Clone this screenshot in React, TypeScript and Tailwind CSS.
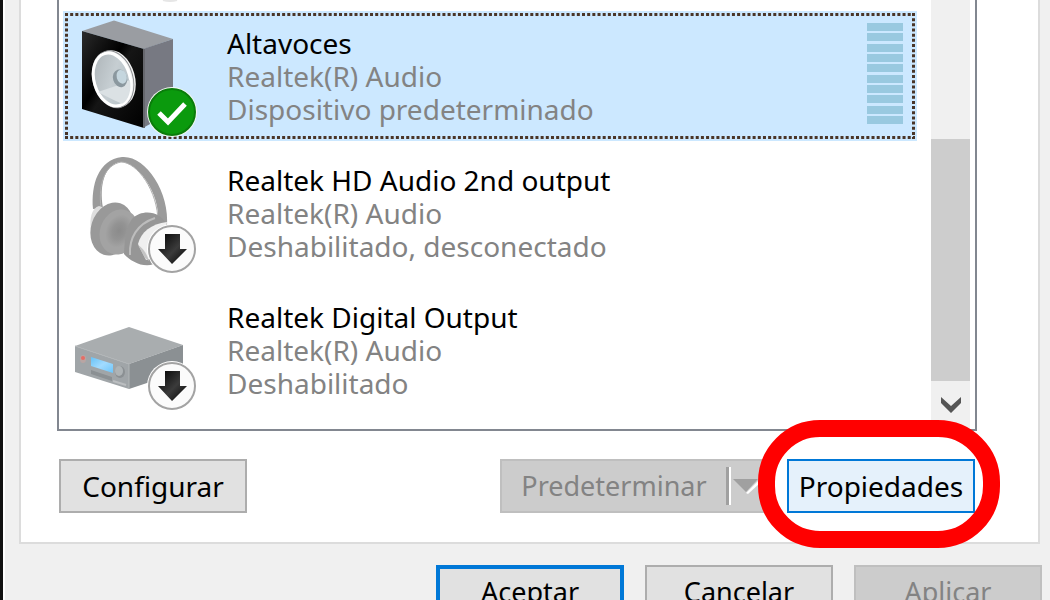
import type { ReactNode } from "react";

function SpeakerIcon() {
  return (
    <svg viewBox="0 0 130 130" className="h-full w-full" aria-hidden="true">
      <defs>
        <linearGradient id="cone" x1="0" y1="0" x2="1" y2="1">
          <stop offset="0" stopColor="#a9b0b4" />
          <stop offset="0.5" stopColor="#c6ced2" />
          <stop offset="1" stopColor="#aebbc2" />
        </linearGradient>
        <linearGradient id="front" x1="0" y1="0" x2="1" y2="1">
          <stop offset="0" stopColor="#2b2b2b" />
          <stop offset="0.4" stopColor="#000" />
          <stop offset="0.5" stopColor="#151515" />
          <stop offset="1" stopColor="#000" />
        </linearGradient>
      </defs>
      <path d="M19 20 51 9.500 110 28 81 38Z" fill="#9a9da2" />
      <path d="M80 38 110 28V100L80 117Z" fill="#777982" />
      <path d="M19 20 81 38V117L19 98Z" fill="url(#front)" />
      <path d="M81 38V117" stroke="#66676d" strokeWidth="2" />
      <g transform="rotate(-16 51 68)">
        <ellipse cx="52" cy="68" rx="20" ry="29" fill="#f2f2f2" />
        <ellipse cx="50" cy="68" rx="20" ry="29" fill="none" stroke="#8d8f92" />
        <ellipse cx="49" cy="68" rx="18" ry="27" fill="url(#cone)" stroke="#fff" strokeWidth="3" />
        <path d="M32 76C38 82 45 88 52 94 60 92 65 83 66 73L57 75Z" fill="#dbe1e4" />
        <ellipse cx="57" cy="69" rx="7" ry="9" fill="#8b989f" />
        <ellipse cx="59" cy="68" rx="5" ry="7" fill="#c5d6de" />
      </g>
    </svg>
  );
}

function HeadphonesIcon() {
  return (
    <svg viewBox="0 0 130 130" className="h-full w-full" aria-hidden="true">
      <defs>
        <radialGradient id="cup">
          <stop offset="0" stopColor="#8b8b8b" />
          <stop offset="0.5" stopColor="#939393" />
          <stop offset="1" stopColor="#a3a3a3" />
        </radialGradient>
      </defs>
      <path
        d="M30 61C28 37 35 12 59 9 82 7 107 43 104 79L95 75C98 45 74 14 58 14 42 16 36 36 40 60Z"
        fill="#9b9b9b"
      />
      <path d="M38 60C35 35 42 17 58 14 74 14 95 43 95 74" fill="none" stroke="#b0b0b0" />
      <path d="M36 58C29 60 26 70 28 82L42 60Z" fill="#dedede" />
      <ellipse cx="49" cy="81" rx="21" ry="27" transform="rotate(18 49 81)" fill="#999" />
      <ellipse cx="56" cy="84" rx="19" ry="23" transform="rotate(20 56 84)" fill="#a3a3a3" />
      <ellipse cx="56" cy="83" rx="13" ry="17" transform="rotate(24 56 83)" fill="url(#cup)" />
      <path d="M69 71C80 60 98 64 104 77L97 112C86 123 69 115 61 106 62 95 61 82 69 71Z" fill="#969696" />
      <path d="M67 107C66 90 74 76 92 70" fill="none" stroke="#bdbdbd" strokeWidth="2" />
      <path d="M75 96C78 84 88 76 104 74L98 108 83 112Z" fill="#efefef" />
      <path d="M82 110 75 97C80 100 84 106 86 113Z" fill="#c4c4c4" />
    </svg>
  );
}

function ReceiverIcon() {
  return (
    <svg viewBox="0 0 130 130" className="h-full w-full" aria-hidden="true">
      <defs>
        <linearGradient id="lcd" x1="0" y1="0" x2="1" y2="1">
          <stop offset="0" stopColor="#66c2f7" />
          <stop offset="0.5" stopColor="#a2dbff" />
          <stop offset="1" stopColor="#6cc5fa" />
        </linearGradient>
      </defs>
      <path d="M12 61 66 42 120 60 66 79Z" fill="#a9adaf" />
      <path d="M12 61 66 79V104L12 87Z" fill="#a0a5a8" />
      <path d="M66 79 120 60V86L66 104Z" fill="#8b9093" />
      <path d="M12 61 66 79V104" fill="none" stroke="#b2b6b8" strokeWidth="1" />
      <path d="M28 72 50 79V88L28 81Z" fill="url(#lcd)" />
      <path d="M28 85 49 92V96L28 89Z" fill="#8b9093" />
      <path d="M50 96 63 100" stroke="#bbbec0" strokeWidth="2" />
      <ellipse cx="20" cy="74" rx="3" ry="4" fill="#b9a5a3" />
      <circle cx="20" cy="73" r="2" fill="#e56d65" />
      <ellipse cx="57" cy="87" rx="5" ry="6" fill="#8b9093" />
      <ellipse cx="56" cy="86" rx="4" ry="5" fill="#aeb3b5" />
    </svg>
  );
}

function CheckBadge() {
  return (
    <svg viewBox="0 0 50 50" className="h-full w-full" aria-hidden="true">
      <circle cx="25" cy="25" r="25" fill="#f4f8f3" />
      <circle cx="25" cy="25" r="23" fill="#0b9a0d" stroke="#0a7c0b" strokeWidth="2" />
      <path d="M12 26 21 35 38 17" fill="none" stroke="#fff" strokeWidth="5" />
    </svg>
  );
}

function DownBadge() {
  return (
    <svg viewBox="0 0 50 50" className="h-full w-full" aria-hidden="true">
      <defs>
        <linearGradient id="arrow" x1="0" y1="0" x2="1" y2="1">
          <stop offset="0" stopColor="#000" />
          <stop offset="0.55" stopColor="#3b3b3b" />
          <stop offset="1" stopColor="#000" />
        </linearGradient>
      </defs>
      <circle cx="25" cy="25" r="25" fill="#fff" />
      <circle cx="25" cy="25" r="23" fill="#fbfbfb" stroke="#a3a3a3" strokeWidth="2" />
      <path d="M18 10H33V25H40L25 40 11 25H18Z" fill="url(#arrow)" />
    </svg>
  );
}

function FocusDots() {
  const dots = { stroke: "#4a3527", strokeWidth: 3, strokeDasharray: "3 2.170" };
  return (
    <svg className="pointer-events-none absolute inset-0.5 h-[126px] w-[calc(100%-4px)]" aria-hidden="true">
      <line x1="0" y1="1.500" x2="100%" y2="1.500" {...dots} />
      <line x1="0" y1="124.500" x2="100%" y2="124.500" {...dots} />
      <line x1="1.500" y1="0" x2="1.500" y2="100%" {...dots} />
      <svg x="100%" className="overflow-visible">
        <line x1="-1.500" y1="0" x2="-1.500" y2="126" {...dots} />
      </svg>
    </svg>
  );
}

type DeviceProps = {
  name: string;
  driver: string;
  status: string;
  icon: ReactNode;
  badge: ReactNode;
  selected?: boolean;
};

function Device({ name, driver, status, icon, badge, selected = false }: DeviceProps) {
  return (
    <li
      role="option"
      aria-selected={selected}
      className={`relative flex h-[130px] items-start pr-[14px] ${selected ? "bg-[#cce8ff]" : "bg-white"}`}
    >
      {selected && <FocusDots />}
      <div className="relative size-[130px] shrink-0">
        {icon}
        <div className="absolute top-[76px] left-[84px] size-[50px]">{badge}</div>
      </div>
      <div className="ml-[34px] flex-1 pt-4 text-[28px] leading-[33px] text-[#838383]">
        <p className="text-black">{name}</p>
        <p>{driver}</p>
        <p>{status}</p>
      </div>
      {selected && (
        <div
          className="mt-3 flex h-[101px] w-9 flex-col justify-between"
          role="meter"
          aria-label="Nivel"
          aria-valuenow={0}
        >
          {Array.from({ length: 10 }, (_, i) => (
            <span key={i} className="h-2 bg-[#99c9e0]" />
          ))}
        </div>
      )}
    </li>
  );
}

export default function App() {
  return (
    <main className="h-screen overflow-hidden border-l-[3px] border-[#111] bg-[#f0f0f0] font-['Noto_Sans',sans-serif] text-[27px] text-black">
      <div className="border-l-2 border-white pr-[10px] pl-[14px]">
        <section className="border-2 border-t-0 border-[#dcdcdc] bg-white pr-[61px] pb-[29px] pl-9">
          <div className="flex border-2 border-t-0 border-[#828790] pr-[5px]">
            <ul role="listbox" aria-label="Dispositivos" className="flex flex-1 flex-col gap-[7px] pr-[14px] pb-[14px] pl-1">
              <li aria-hidden="true" className="h-1 overflow-hidden pl-[87px]">
                <svg viewBox="0 0 40 4" className="h-1 w-10">
                  <path d="M13 0Q20 2 27 0" fill="none" stroke="#e6e6e6" strokeWidth="2" />
                </svg>
              </li>
              <Device
                selected
                name="Altavoces"
                driver="Realtek(R) Audio"
                status="Dispositivo predeterminado"
                icon={<SpeakerIcon />}
                badge={<CheckBadge />}
              />
              <Device
                name="Realtek HD Audio 2nd output"
                driver="Realtek(R) Audio"
                status="Deshabilitado, desconectado"
                icon={<HeadphonesIcon />}
                badge={<DownBadge />}
              />
              <Device
                name="Realtek Digital Output"
                driver="Realtek(R) Audio"
                status="Deshabilitado"
                icon={<ReceiverIcon />}
                badge={<DownBadge />}
              />
            </ul>
            <div className="flex w-[39px] shrink-0 flex-col bg-[#f0f0f0] pt-[139px]">
              <div className="flex-1 bg-[#cdcdcd]" />
              <button type="button" aria-label="Desplazar hacia abajo" className="flex h-12 items-center justify-center">
                <svg viewBox="0 0 20 16" className="h-4 w-5" aria-hidden="true">
                  <path d="M0 0 10 9 20 0V6L10 16 0 6Z" fill="#555" />
                </svg>
              </button>
            </div>
          </div>

          <div className="mt-7 flex px-[2px]">
            <button
              type="button"
              className="h-[54px] w-[188px] border-2 border-[#adadad] bg-[#e1e1e1] text-center text-[28px]"
            >
              Configurar
            </button>
            <div className="mr-[17px] ml-auto flex h-[54px] w-[270px] items-center border-2 border-[#bfbfbf] bg-[#cccccc] text-[#838383]">
              <button type="button" disabled className="h-full flex-1 text-center">
                Predeterminar
              </button>
              <span className="h-[38px] w-[5px] border-r-2 border-l-[3px] border-r-white border-l-[#a0a0a0]" />
              <button type="button" disabled aria-label="Más opciones" className="flex h-full w-[37px] items-center pl-[2px]">
                <svg viewBox="0 0 26 16" className="h-4 w-[26px]" aria-hidden="true">
                  <path d="M13 15 26 2V6L15 16Z" fill="#fff" />
                  <path d="M0 1H25L13 14Z" fill="#a0a0a0" />
                </svg>
              </button>
            </div>
            <div className="relative">
              <button
                type="button"
                className="h-[54px] w-[188px] border-2 border-[#0078d7] bg-[#e5f1fb] text-center text-[28px]"
              >
                Propiedades
              </button>
              <div className="pointer-events-none absolute -top-[39px] -right-[25px] -bottom-[35px] -left-[29px] rounded-[62px] border-[17px] border-[#ff0000]" />
            </div>
          </div>
        </section>
      </div>

      <footer className="flex justify-end gap-[21px] border-l-2 border-white pt-[21px] pr-2">
        <button type="button" className="h-[54px] w-[188px] border-4 border-[#0078d7] bg-[#e1e1e1] text-center">
          Aceptar
        </button>
        <button type="button" className="h-[54px] w-[188px] border-2 border-[#adadad] bg-[#e1e1e1] text-center">
          Cancelar
        </button>
        <button
          type="button"
          disabled
          className="h-[54px] w-[188px] border-2 border-[#bfbfbf] bg-[#cccccc] text-center text-[#838383]"
        >
          Aplicar
        </button>
      </footer>
    </main>
  );
}
